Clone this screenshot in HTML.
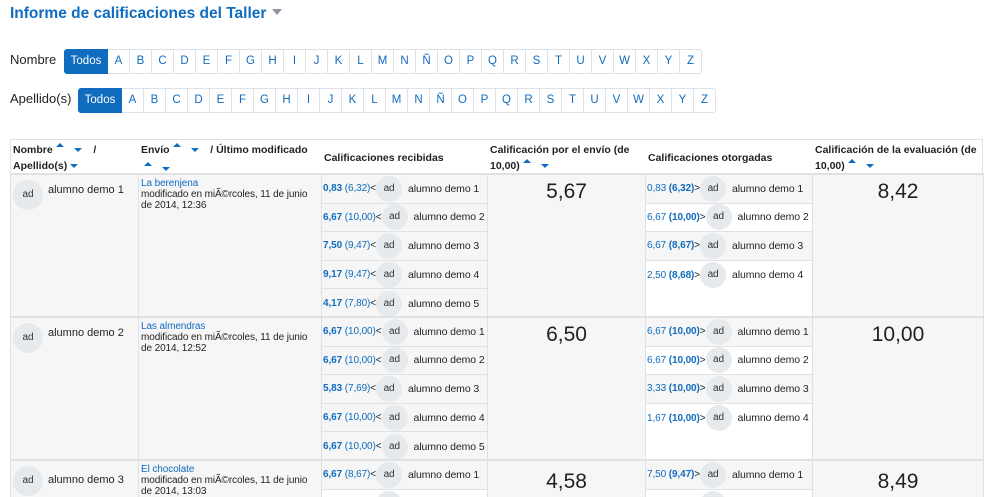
<!DOCTYPE html>
<html><head><meta charset="utf-8"><style>
*{box-sizing:border-box;margin:0;padding:0}
html,body{width:986px;height:497px;overflow:hidden}
body{background:#fff;font-family:"Liberation Sans",sans-serif;color:#1d2125;font-size:11px;position:relative}
h1{position:absolute;left:10px;top:5px;font-size:15.5px;color:#0f6cbf;font-weight:bold}
h1 .car{display:inline-block;width:0;height:0;border-left:5px solid transparent;border-right:5px solid transparent;border-top:6px solid #8f959e;margin-left:6px;vertical-align:3px}
.bar{position:absolute;display:flex;height:25px}
.bar .lbl{font-size:13px;line-height:22px}
.bar a{display:block;height:25px;width:22px;border:1px solid #dee2e6;border-left:none;color:#0f6cbf;text-align:center;line-height:23px;font-size:11.5px}
.bar a.t{width:44px;background:#0f6cbf;color:#fff;border:1px solid #0f6cbf;border-radius:3px 0 0 3px}
.bar a:last-child{border-radius:0 3px 3px 0}
.tbl{position:absolute;left:10px;top:139px;width:973px;height:370px;border:1px solid #dee2e6;border-bottom:none}
.hd{position:absolute;top:0;height:34px;font-weight:bold;font-size:10.5px;line-height:16px;padding:2px 2px;white-space:nowrap}
.up,.dn{display:inline-block;width:0;height:0;border-left:4px solid transparent;border-right:4px solid transparent;vertical-align:middle}
.up{border-bottom:4px solid #0f6cbf;vertical-align:6px;margin-left:3px}
.dn{border-top:4px solid #0f6cbf;margin-left:10px}
.cell{position:absolute;background:#f6f6f6;border-right:1px solid #dee2e6;border-top:2px solid #dee2e6}
.av{display:inline-block;width:26px;height:26px;border-radius:50%;background:#e7eaed;color:#333;font-size:10px;text-align:center;line-height:26px;flex:none}
.av.big{width:30px;height:30px;line-height:30px}
.sub{display:flex;align-items:center;height:28.6px;border-bottom:1px solid #dee2e6;white-space:nowrap;padding-left:1px;font-size:10px;letter-spacing:-0.1px}
.sub:last-child{border-bottom:none}
.sub .n{margin-left:6px;font-size:10.5px}
.b{color:#0f6cbf;font-weight:bold}
.l{color:#0f6cbf}
.g{font-size:21px;text-align:center;padding-top:5px;color:#1d2125}
.w{background:#fff}
.sm{font-size:10px;line-height:11px;padding:3px 2px;letter-spacing:-0.1px}
</style></head><body>
<h1>Informe de calificaciones del Taller<span class="car"></span></h1>
<div class="bar" style="left:10px;top:49px"><span class="lbl" style="width:54px">Nombre</span><a class="t">Todos</a><a>A</a><a>B</a><a>C</a><a>D</a><a>E</a><a>F</a><a>G</a><a>H</a><a>I</a><a>J</a><a>K</a><a>L</a><a>M</a><a>N</a><a>Ñ</a><a>O</a><a>P</a><a>Q</a><a>R</a><a>S</a><a>T</a><a>U</a><a>V</a><a>W</a><a>X</a><a>Y</a><a>Z</a></div>
<div class="bar" style="left:10px;top:88px"><span class="lbl" style="width:68px">Apellido(s)</span><a class="t">Todos</a><a>A</a><a>B</a><a>C</a><a>D</a><a>E</a><a>F</a><a>G</a><a>H</a><a>I</a><a>J</a><a>K</a><a>L</a><a>M</a><a>N</a><a>Ñ</a><a>O</a><a>P</a><a>Q</a><a>R</a><a>S</a><a>T</a><a>U</a><a>V</a><a>W</a><a>X</a><a>Y</a><a>Z</a></div>

<div class="tbl">
<div class="hd" style="left:0;width:128px">Nombre<span class="up"></span><span class="dn"></span> &nbsp; &nbsp;/<br>Apellido(s)<span class="dn" style="margin-left:3px"></span></div>
<div class="hd" style="left:128px;width:183px">Envío<span class="up"></span><span class="dn"></span> &nbsp; &nbsp;/ Último modificado<br><span class="up" style="margin-left:3px;vertical-align:3px"></span><span class="dn" style="vertical-align:-2px"></span></div>
<div class="hd" style="left:311px;width:166px;padding-top:10px">Calificaciones recibidas</div>
<div class="hd" style="left:477px;width:158px">Calificación por el envío (de<br>10,00)<span class="up"></span><span class="dn"></span></div>
<div class="hd" style="left:635px;width:167px;padding-top:10px">Calificaciones otorgadas</div>
<div class="hd" style="left:802px;width:171px">Calificación de la evaluación (de<br>10,00)<span class="up"></span><span class="dn"></span></div>

<!-- row 1 -->
<div class="cell" style="left:0;top:33px;width:128px;height:145px;padding:5px 2px;display:flex;align-items:flex-start"><span class="av big">ad</span><span style="margin-left:5px;margin-top:4px">alumno demo 1</span></div>
<div class="cell sm" style="left:128px;top:33px;width:183px;height:145px"><span class="l">La berenjena</span><br>modificado en miÃ©rcoles, 11 de junio de 2014, 12:36</div>
<div class="cell" style="left:311px;top:33px;width:166px;height:145px">
<div class="sub"><span class="b">0,83</span>&nbsp;<span class="l">(6,32)</span>&lt; <span class="av">ad</span><span class="n">alumno demo 1</span></div>
<div class="sub"><span class="b">6,67</span>&nbsp;<span class="l">(10,00)</span>&lt; <span class="av">ad</span><span class="n">alumno demo 2</span></div>
<div class="sub"><span class="b">7,50</span>&nbsp;<span class="l">(9,47)</span>&lt; <span class="av">ad</span><span class="n">alumno demo 3</span></div>
<div class="sub"><span class="b">9,17</span>&nbsp;<span class="l">(9,47)</span>&lt; <span class="av">ad</span><span class="n">alumno demo 4</span></div>
<div class="sub"><span class="b">4,17</span>&nbsp;<span class="l">(7,80)</span>&lt; <span class="av">ad</span><span class="n">alumno demo 5</span></div>
</div>
<div class="cell g" style="left:477px;top:33px;width:158px;height:145px">5,67</div>
<div class="cell w" style="left:635px;top:33px;width:167px;height:145px">
<div class="sub" style="background:#f6f6f6"><span class="l">0,83</span>&nbsp;<span class="b">(6,32)</span>&gt; <span class="av">ad</span><span class="n">alumno demo 1</span></div>
<div class="sub"><span class="l">6,67</span>&nbsp;<span class="b">(10,00)</span>&gt; <span class="av">ad</span><span class="n">alumno demo 2</span></div>
<div class="sub" style="background:#f6f6f6"><span class="l">6,67</span>&nbsp;<span class="b">(8,67)</span>&gt; <span class="av">ad</span><span class="n">alumno demo 3</span></div>
<div class="sub" style="border-bottom:none"><span class="l">2,50</span>&nbsp;<span class="b">(8,68)</span>&gt; <span class="av">ad</span><span class="n">alumno demo 4</span></div>
</div>
<div class="cell g" style="left:802px;top:33px;width:171px;height:145px">8,42</div>

<!-- row 2 -->
<div class="cell" style="left:0;top:176px;width:128px;height:145px;padding:5px 2px;display:flex;align-items:flex-start"><span class="av big">ad</span><span style="margin-left:5px;margin-top:4px">alumno demo 2</span></div>
<div class="cell sm" style="left:128px;top:176px;width:183px;height:145px"><span class="l">Las almendras</span><br>modificado en miÃ©rcoles, 11 de junio de 2014, 12:52</div>
<div class="cell" style="left:311px;top:176px;width:166px;height:145px">
<div class="sub"><span class="b">6,67</span>&nbsp;<span class="l">(10,00)</span>&lt; <span class="av">ad</span><span class="n">alumno demo 1</span></div>
<div class="sub"><span class="b">6,67</span>&nbsp;<span class="l">(10,00)</span>&lt; <span class="av">ad</span><span class="n">alumno demo 2</span></div>
<div class="sub"><span class="b">5,83</span>&nbsp;<span class="l">(7,69)</span>&lt; <span class="av">ad</span><span class="n">alumno demo 3</span></div>
<div class="sub"><span class="b">6,67</span>&nbsp;<span class="l">(10,00)</span>&lt; <span class="av">ad</span><span class="n">alumno demo 4</span></div>
<div class="sub"><span class="b">6,67</span>&nbsp;<span class="l">(10,00)</span>&lt; <span class="av">ad</span><span class="n">alumno demo 5</span></div>
</div>
<div class="cell g" style="left:477px;top:176px;width:158px;height:145px">6,50</div>
<div class="cell w" style="left:635px;top:176px;width:167px;height:145px">
<div class="sub" style="background:#f6f6f6"><span class="l">6,67</span>&nbsp;<span class="b">(10,00)</span>&gt; <span class="av">ad</span><span class="n">alumno demo 1</span></div>
<div class="sub"><span class="l">6,67</span>&nbsp;<span class="b">(10,00)</span>&gt; <span class="av">ad</span><span class="n">alumno demo 2</span></div>
<div class="sub" style="background:#f6f6f6"><span class="l">3,33</span>&nbsp;<span class="b">(10,00)</span>&gt; <span class="av">ad</span><span class="n">alumno demo 3</span></div>
<div class="sub" style="border-bottom:none"><span class="l">1,67</span>&nbsp;<span class="b">(10,00)</span>&gt; <span class="av">ad</span><span class="n">alumno demo 4</span></div>
</div>
<div class="cell g" style="left:802px;top:176px;width:171px;height:145px">10,00</div>

<!-- row 3 -->
<div class="cell" style="left:0;top:319px;width:128px;height:60px;padding:5px 2px;display:flex;align-items:flex-start"><span class="av big">ad</span><span style="margin-left:5px;margin-top:8px">alumno demo 3</span></div>
<div class="cell sm" style="left:128px;top:319px;width:183px;height:60px"><span class="l">El chocolate</span><br>modificado en miÃ©rcoles, 11 de junio de 2014, 13:03</div>
<div class="cell w" style="left:311px;top:319px;width:166px;height:60px">
<div class="sub" style="background:#f6f6f6"><span class="b">6,67</span>&nbsp;<span class="l">(8,67)</span>&lt; <span class="av">ad</span><span class="n">alumno demo 1</span></div>
<div class="sub"><span style="visibility:hidden">6,67 (8,67)&lt;</span> <span class="av">ad</span></div>
</div>
<div class="cell g" style="left:477px;top:319px;width:158px;height:60px;padding-top:9px">4,58</div>
<div class="cell w" style="left:635px;top:319px;width:167px;height:60px">
<div class="sub" style="background:#f6f6f6"><span class="l">7,50</span>&nbsp;<span class="b">(9,47)</span>&gt; <span class="av">ad</span><span class="n">alumno demo 1</span></div>
<div class="sub"><span style="visibility:hidden">7,50 (9,47)&gt;</span> <span class="av">ad</span></div>
</div>
<div class="cell g" style="left:802px;top:319px;width:171px;height:60px;padding-top:9px">8,49</div>
</div>
</body></html>
